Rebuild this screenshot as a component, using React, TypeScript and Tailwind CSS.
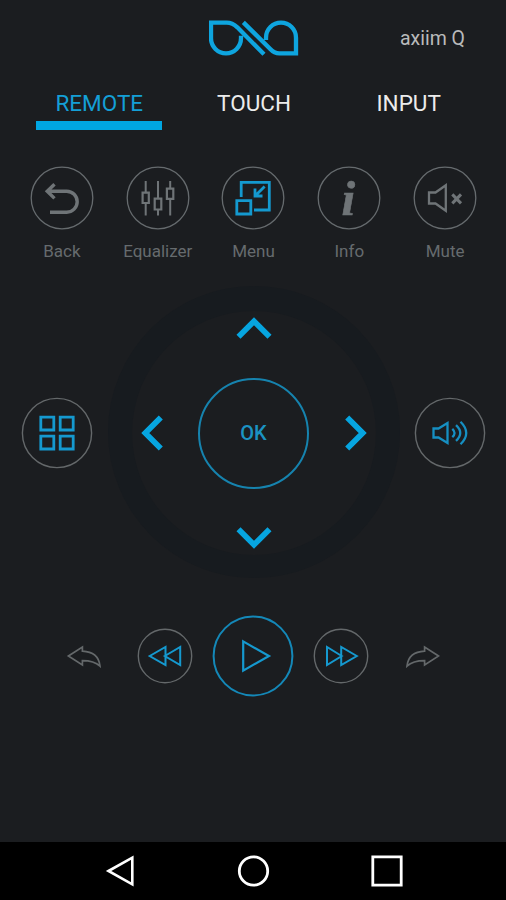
import { FC, ReactNode } from "react";
import clsx from "clsx";

const tabs = ["REMOTE", "TOUCH", "INPUT"];

interface IconProps {
  size: number;
  className?: string;
  children: ReactNode;
}

// Icons are drawn around their own centre, one unit per pixel
const Icon: FC<IconProps> = ({ size, className, children }) => (
  <svg
    width={size}
    height={size}
    viewBox={`${-size / 2} ${-size / 2} ${size} ${size}`}
    fill="none"
    stroke="currentColor"
    className={clsx("shrink-0", className)}
  >
    {children}
  </svg>
);

const Logo: FC = () => (
  <svg
    width="90"
    height="36"
    viewBox="57 59 270 108"
    fill="none"
    stroke="#0ea5df"
    strokeWidth="13"
  >
    <path d="M222 162 L142 81 Q127 67 110 67 H63 V114 A45 45 0 0 0 153 114 V106" />
    <path d="M160 66 L240 145 Q253 159 268 159 H318 V112 A45 45 0 0 0 228 112 V119" />
  </svg>
);

const actions = [
  {
    label: "Back",
    icon: (
      <path
        d="M-7.5 -13.8 L-14.8 -6.8 L-7.5 .4 M-14.5 -6.8 H4.7 A10.5 10.5 0 0 1 4.7 14.2 H-12"
        strokeWidth="3.4"
      />
    ),
  },
  {
    label: "Equalizer",
    icon: (
      <g strokeWidth="2">
        <path d="M-12.3 -17 V-6 M-12.3 6 V17.5 M0 -17 V0 M0 12 V17.5 M12.2 -17 V-10 M12.2 1 V17.5" />
        <path
          d="M-15.4 -5.3 H-9.2 V5 H-15.4Z M-3.3 .7 H3.3 V11.5 H-3.3Z M8.9 -9.4 H15.3 V.8 H8.9Z"
          strokeWidth="2.2"
        />
      </g>
    ),
  },
  {
    label: "Menu",
    active: true,
    icon: (
      <g strokeWidth="2.8">
        <path d="M-11.8 -1 V-15.6 H16.3 V12 H1" />
        <path d="M-16.2 2.6 H-2.2 V16 H-16.2Z" />
        <path d="M11.6 -11.6 L2.5 -2.5 M2 -9.5 V-2 H9.5" />
      </g>
    ),
  },
  {
    label: "Info",
    icon: (
      <text
        x="-.8"
        y="16.8"
        fontSize="49"
        textAnchor="middle"
        fill="currentColor"
        strokeWidth=".6"
        className="font-['Liberation_Serif',serif] font-bold italic"
      >
        i
      </text>
    ),
  },
  {
    label: "Mute",
    icon: (
      <>
        <path d="M-16 -5.5 H-9.5 L.8 -12.8 V12.8 L-9.5 5.5 H-16Z" strokeWidth="2.3" />
        <path d="M7.3 -3.6 L16 5.4 M16 -3.6 L7.3 5.4" strokeWidth="3" />
      </>
    ),
  },
];

const Header: FC = () => (
  <header className="grid h-[76px] grid-cols-3 items-center pr-[41px] pl-[43px]">
    <span />
    <div className="flex justify-center">
      <Logo />
    </div>
    <span className="pt-0.5 text-right text-[19.5px] text-[#b9babb]">axiim Q</span>
  </header>
);

const Tabs: FC = () => (
  <nav className="grid h-[54px] grid-cols-3 pr-[20px] pl-[22px]">
    {tabs.map((tab, i) => (
      <div key={tab} className="flex flex-col items-center justify-between">
        <span
          className={clsx(
            "pt-3 text-[22.5px] leading-[31px]",
            i === 0 ? "text-[#149fd6]" : "text-[#ececec]"
          )}
        >
          {tab}
        </span>
        {i === 0 && <div className="h-[9px] w-[126px] bg-[#00a6e2]" />}
      </div>
    ))}
  </nav>
);

const Actions: FC = () => (
  <section className="mt-[36px] grid grid-cols-5 pr-[13px] pl-[14px]">
    {actions.map(({ label, icon, active }) => (
      <div key={label} className="flex flex-col items-center text-[#666b6e]">
        <Icon size={64}>
          <circle r="30.8" strokeWidth="1.3" />
          <g className={active ? "text-[#1499cf]" : "text-[#6f7477]"} stroke="currentColor">
            {icon}
          </g>
        </Icon>
        <span className="mt-[9px] text-[17px] leading-6">{label}</span>
      </div>
    ))}
  </section>
);

const Arrow: FC<{ className?: string }> = ({ className }) => (
  <Icon size={36} className={className}>
    <path d="M-15.5 7.8 L0 -7.7 L15.5 7.8" stroke="#06a5e0" strokeWidth="5.7" />
  </Icon>
);

const DPad: FC = () => (
  <div className="flex size-[292px] items-center justify-center rounded-full bg-[#171b1f]">
    <div className="mt-[2px] flex size-[244px] flex-col items-center justify-between rounded-full bg-[#1b1d20]">
      <Arrow />
      <div className="flex w-full items-center justify-between px-[3px]">
        <Arrow className="-rotate-90" />
        <div className="flex size-[111px] items-center justify-center rounded-full border-2 border-[#1683ae] text-xl font-medium text-[#1b93c3]">
          OK
        </div>
        <Arrow className="rotate-90" />
      </div>
      <Arrow className="rotate-180" />
    </div>
  </div>
);

const Navigation: FC = () => (
  <section className="mt-[23px] flex items-center justify-between pr-[20px] pl-[21px]">
    <Icon size={72} className="mt-[2px] text-[#64686a]">
      <circle r="34.6" strokeWidth="1.4" />
      <path
        d="M-16.2 -15.8 H-3.2 V-3 H-16.2Z M3.2 -15.8 H16.2 V-3 H3.2Z M-16.2 3.2 H-3.2 V16 H-16.2Z M3.2 3.2 H16.2 V16 H3.2Z"
        stroke="#1599cf"
        strokeWidth="2.8"
      />
    </Icon>
    <DPad />
    <Icon size={72} className="mt-[2px] text-[#64686a]">
      <circle r="34.6" strokeWidth="1.4" />
      <g stroke="#168fc2" strokeWidth="2.3">
        <path d="M-16.5 -4.5 H-11.5 L-2.5 -10 V10 L-11.5 4.5 H-16.5Z" />
        <path d="M2.3 -4.2 Q6.8 0 2.3 4.2 M6 -7.8 Q14.5 0 6 7.8 M10.5 -11.3 Q22 0 10.5 11.3" />
      </g>
    </Icon>
  </section>
);

const Playback: FC = () => (
  <section className="mt-[37px] flex items-center justify-between px-[66px] text-[#64686a]">
    <Icon size={36}>
      <path
        d="M-15.6 0 L-1.6 -9 V-4.8 C9 -4.3 15 1 16 10 C11 5.4 5 4.6 -1.6 4.6 V9Z"
        strokeWidth="1.7"
      />
    </Icon>
    <div className="flex items-center gap-[19px]">
      <Icon size={56}>
        <circle r="26.7" strokeWidth="1.4" />
        <path
          d="M-15.3 0 L.5 -9 V9Z M-.2 0 L15.2 -9 V9Z"
          stroke="#1599cf"
          strokeWidth="2"
        />
      </Icon>
      <Icon size={82} className="text-[#1488b8]">
        <circle r="39.4" strokeWidth="2" />
        <path d="M-9.8 -14.6 L16 0 L-9.8 14.6Z" stroke="#1599cf" strokeWidth="2.2" />
      </Icon>
      <Icon size={56}>
        <circle r="26.7" strokeWidth="1.4" />
        <path
          d="M15.8 0 L.2 -9 V9Z M.7 0 L-14 -9 V9Z"
          stroke="#1599cf"
          strokeWidth="2"
        />
      </Icon>
    </div>
    <Icon size={36}>
      <path
        d="M16.6 0 L2.6 -9 V-4.8 C-8 -4.3 -14 1 -15 10 C-10 5.4 -4 4.6 2.6 4.6 V9Z"
        strokeWidth="1.7"
      />
    </Icon>
  </section>
);

const SystemBar: FC = () => (
  <footer className="mt-auto flex h-[58px] items-center justify-between bg-black px-[102px] text-white">
    <Icon size={36}>
      <path d="M-11.5 0 L12.3 -13.3 V13.3Z" strokeWidth="2.6" />
    </Icon>
    <Icon size={36}>
      <circle cx=".5" r="14.2" strokeWidth="2.8" />
    </Icon>
    <Icon size={36}>
      <path d="M-13.2 -14.2 H15.2 V14.2 H-13.2Z" strokeWidth="2.8" />
    </Icon>
  </footer>
);

const App: FC = () => {
  return (
    <main className="flex h-[900px] w-[506px] flex-col overflow-hidden bg-[#1b1d20] font-['Roboto',sans-serif]">
      <Header />
      <Tabs />
      <Actions />
      <Navigation />
      <Playback />
      <SystemBar />
    </main>
  );
};

export default App;
